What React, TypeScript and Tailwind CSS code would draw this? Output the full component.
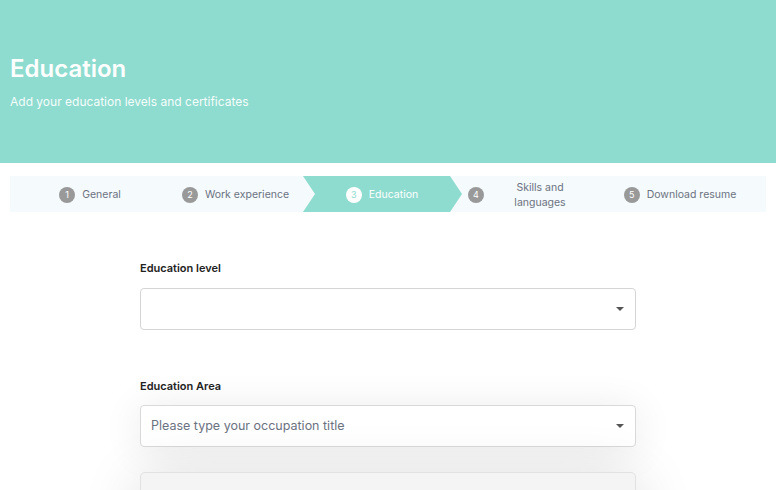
const steps = [
  { n: 1, label: 'General', box: 'w-[160px]' },
  { n: 2, label: 'Work experience', box: 'w-[131px]' },
  { n: 3, label: 'Education', box: 'w-[162px]' },
  { n: 4, label: 'Skills and languages', box: 'w-[151px] justify-start pl-[5px]' },
  { n: 5, label: 'Download resume', box: 'w-[132px]' },
];

function Caret() {
  return (
    <svg width="10" height="6" viewBox="0 0 10 6" className="text-[#555]">
      <path d="M1 1h8L5 5z" fill="currentColor" />
    </svg>
  );
}

function Stepper() {
  const active = 3;
  return (
    <div className="relative mx-[10px] mt-[13px] flex h-[36px] bg-[#f5fafd]">
      <svg
        className="absolute left-[293px] top-0 h-[36px] w-[160px]"
        viewBox="0 0 160 36"
        preserveAspectRatio="none"
      >
        <polygon points="0,0 147,0 159,18 147,36 0,36 12,18" fill="#8edccf" />
      </svg>
      {steps.map((s) => {
        const on = s.n === active;
        return (
          <div key={s.n} className={`relative flex shrink-0 items-center justify-center gap-[7px] pt-px ${s.box}`}>
            <span
              className={`flex h-[16px] w-[16px] items-center justify-center rounded-full text-[9px] ${
                on ? 'bg-white text-[#8edccf]' : 'bg-[#999] text-white'
              }`}
            >
              {s.n}
            </span>
            {s.n === 4 ? (
              <span className="w-[98px] text-center text-[10.5px] leading-[15px] text-[#6b7280]">
                Skills and
                <br />
                languages
              </span>
            ) : (
              <span className={`text-[10.5px] ${on ? 'text-white' : 'text-[#6b7280]'}`}>{s.label}</span>
            )}
          </div>
        );
      })}
    </div>
  );
}

export default function App() {
  return (
    <div className="h-[490px] overflow-hidden bg-white font-['Inter',sans-serif]">
      <header className="flex h-[163px] flex-col bg-[#8edccf] px-[10px] pt-[54px] text-white">
        <h1 className="text-[24px] font-semibold leading-[30px]">Education</h1>
        <p className="mt-[9px] text-[12px] text-white/95">Add your education levels and certificates</p>
      </header>

      <Stepper />

      <div className="ml-[140px] mt-[49px] w-[496px]">
        <label className="block text-[11px] font-semibold leading-[14px] text-[#222]">Education level</label>
        <div className="mt-[13px] flex h-[42px] items-center justify-end rounded-[4px] border border-[#d4d4d4] bg-white pr-[10px]">
          <Caret />
        </div>

        <label className="mt-[49px] block text-[11px] font-semibold leading-[14px] text-[#222]">Education Area</label>
        <div className="mt-[12px] flex h-[42px] items-center justify-between rounded-[4px] border border-[#d9d9d9] bg-white pl-[10px] pr-[10px] shadow-[0_4px_40px_rgba(0,0,0,0.09)]">
          <span className="text-[12.5px] text-[#6b7280]">Please type your occupation title</span>
          <Caret />
        </div>

        <div className="mt-[25px] h-[60px] rounded-[5px] border border-[#e2e2e2] bg-[#f4f4f4] px-[10px] pt-[12px] shadow-[0_10px_60px_rgba(0,0,0,0.16)]">
          <span className="text-[13px] font-semibold leading-[16px] text-[#222]">Start typing to see your suggestions</span>
        </div>
      </div>
    </div>
  );
}
